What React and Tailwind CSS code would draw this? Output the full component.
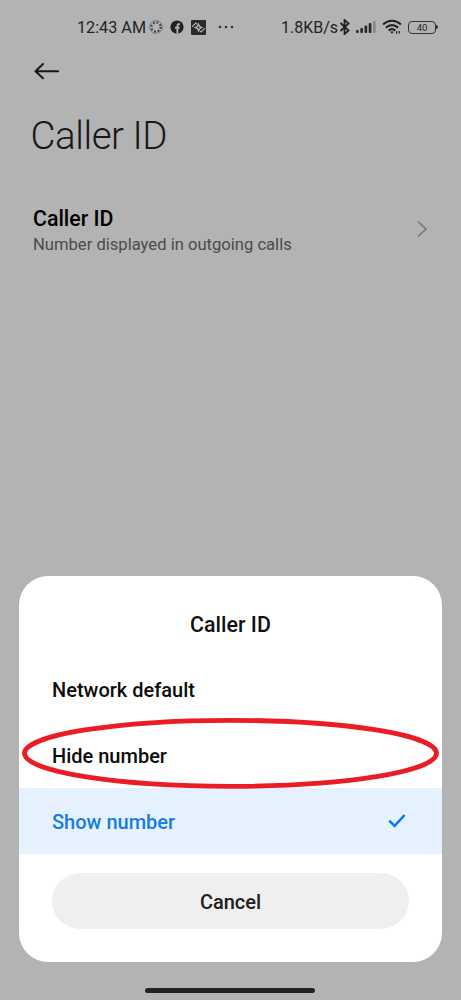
import React from "react";

function StatusBar() {
  return (
    <div className="flex h-[54px] items-center pl-[77px] text-[#242424]">
      <span className="w-[71px] whitespace-nowrap pt-[2px] text-[16.2px] leading-none">12:43 AM</span>
      <svg className="size-4" viewBox="0 0 16 16" fill="none" stroke="#333">
        <circle cx="8" cy="8" r="6.4" strokeWidth="1" opacity=".45" />
        <circle cx="8" cy="8" r="4.6" strokeWidth="2" strokeDasharray="1.7 1.913" />
      </svg>
      <svg className="ml-[6px] size-[14px]" viewBox="0 0 14 14">
        <circle cx="7" cy="7" r="6.6" fill="#222" />
        <path d="M7.4 13.5V6.2c0-1.5.7-2.2 2.5-2.2M5 7.8h4.6" fill="none" stroke="#b3b3b3" strokeWidth="1.9" />
      </svg>
      <svg className="ml-[7px] size-[15px]" viewBox="0 0 15 15">
        <rect width="15" height="15" rx="1" fill="#292929" />
        <path d="M1 6.8 4.8 3l1.6 1.4M14 8.2 10.2 12l-1.6-1.4" fill="none" stroke="#b3b3b3" strokeWidth="1.1" />
        <path d="M7.5 2.6 9 6 12.4 7.5 9 9 7.5 12.4 6 9 2.6 7.5 6 6Z" fill="#b3b3b3" />
        <path d="M7.5 6.2v2.6M6.2 7.5h2.6" stroke="#292929" strokeWidth=".8" />
      </svg>
      <svg className="ml-[12px] h-4 w-[17px]" viewBox="0 0 17 16" fill="#333">
        <circle cx="2" cy="8" r="1.3" /><circle cx="8" cy="8" r="1.3" /><circle cx="14" cy="8" r="1.3" />
      </svg>
      <span className="ml-[46px] w-[58px] whitespace-nowrap pt-px text-[16px] leading-none">1.8KB/s</span>
      <svg className="h-4 w-3" viewBox="0 0 12 16" fill="none" stroke="#222" strokeWidth="1.8">
        <path d="m1.5 4 8 7.5-4 3.6V.9l4 3.6-8 7.5" />
      </svg>
      <svg className="ml-[5px] h-[14px] w-[20px]" viewBox="0 0 20 14" fill="#292929">
        <rect x="0" y="10" width="2.7" height="3" rx="1" />
        <rect x="4.3" y="8" width="2.7" height="5" rx="1" />
        <rect x="8.5" y="5.5" width="2.7" height="7.5" rx="1" />
        <rect x="12.7" y="3" width="2.7" height="10" rx="1" />
        <rect x="17" y="1" width="2.7" height="12" rx="1" opacity=".3" />
      </svg>
      <svg className="ml-[6px] h-4 w-5" viewBox="0 0 20 16" fill="none" stroke="#222" strokeWidth="2">
        <path d="M1 5.4q9-7.2 18 0M3.8 8.6q6.2-5 12.4 0M6.6 11.5q3.4-2.7 6.8 0" />
        <path d="m8 12.4 4 0-2 2.3Z" fill="#222" stroke="none" />
        <path d="M14.7 12v2.7M17.3 14.5V12" strokeWidth="1.2" />
      </svg>
      <div className="ml-[6px] flex h-[13px] w-[28px] items-center justify-center rounded-[4px] border-[1.5px] border-[#333] pt-px text-[9.5px] leading-none">
        40
      </div>
      <div className="h-1 w-[2px] rounded-r bg-[#333]" />
    </div>
  );
}

function Option({ label, selected }) {
  return (
    <div
      className={
        selected
          ? "flex h-[66px] items-center justify-between bg-[#e5f1fe] pr-[36px] pl-[33px] text-[#167cdf]"
          : "flex h-[66px] items-center pl-[33px] text-[#0c0c0c]"
      }
    >
      <span className="pt-[2px] text-[20px] leading-6 font-medium">{label}</span>
      {selected && (
        <svg className="h-4 w-[18px]" viewBox="0 0 18 16" fill="none" stroke="#087be9" strokeWidth="2.5">
          <path d="m1.2 7.6 5.4 5.3L16.6 2" />
        </svg>
      )}
    </div>
  );
}

export default function App() {
  return (
    <div className="relative flex h-[1000px] w-[461px] flex-col overflow-hidden bg-[#b3b3b3] font-['Roboto',sans-serif]">
      <StatusBar />
      <header className="pl-[31px]">
        <svg className="mt-[8px] ml-[3px] h-[18px] w-[26px]" viewBox="0 0 26 18" fill="none" stroke="#171717" strokeWidth="2" strokeLinecap="round" strokeLinejoin="round">
          <path d="M9 2 1.5 9.3 9 16.2M1.8 9.3H24.2" />
        </svg>
        <h1 className="mt-[32px] -ml-[0.5px] text-[38.5px] leading-[48px] font-light tracking-[-0.45px] text-[#181818]">Caller ID</h1>
      </header>
      <div className="mt-[45px] flex items-center justify-between pr-[33px] pl-[33px]">
        <div>
          <div className="text-[21.3px] leading-[27px] font-medium text-black">Caller ID</div>
          <div className="pt-px text-[16.6px] leading-6 text-[#4b4b4b]">Number displayed in outgoing calls</div>
        </div>
        <svg className="-mt-[4px] h-[18px] w-[11px]" viewBox="0 0 11 18" fill="none" stroke="#777" strokeWidth="1.6">
          <path d="m1 1.5 8 7.5-8 7.5" />
        </svg>
      </div>
      <section className="mt-auto ml-[19px] h-[386px] w-[423px] shrink-0 overflow-hidden rounded-[29px] bg-white">
        <h2 className="flex h-[80px] items-center justify-center pt-[19px] text-[21.4px] font-medium text-[#111]">Caller ID</h2>
        <Option label="Network default" />
        <Option label="Hide number" />
        <Option label="Show number" selected />
        <button className="mt-[19px] ml-[33px] flex h-[56px] w-[357px] items-center justify-center rounded-full bg-[#efefef] pt-[2px] text-[20px] font-medium text-[#202020]">
          Cancel
        </button>
      </section>
      <div className="mt-[26px] mb-[7px] ml-[145px] h-[5px] w-[170px] shrink-0 rounded-full bg-[#222]" />
      <svg className="pointer-events-none absolute top-[717px] left-[21px] h-[73px] w-[419px]" viewBox="0 0 419 73" fill="none">
        <ellipse cx="209.5" cy="36.3" rx="206" ry="33" stroke="#ea1c24" strokeWidth="4.8" />
      </svg>
    </div>
  );
}
